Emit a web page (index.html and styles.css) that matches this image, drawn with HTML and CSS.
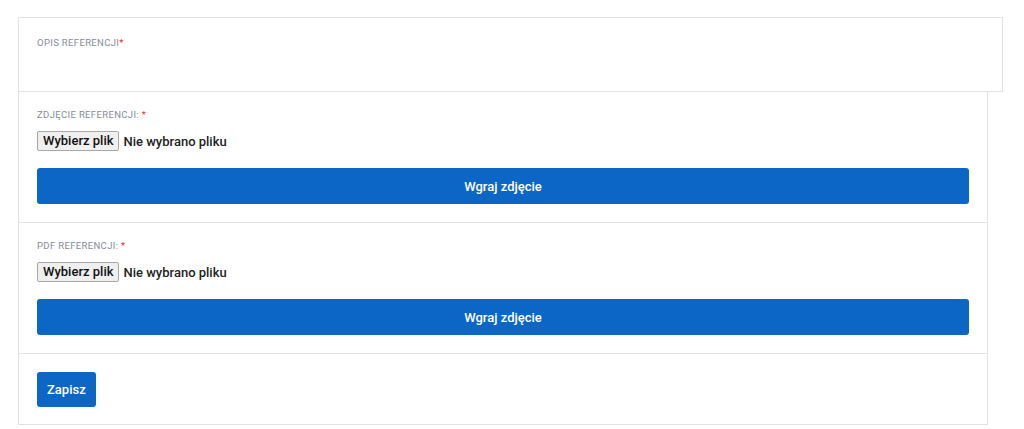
FILE: index.html
```html
<!DOCTYPE html>
<html lang="pl">
<head>
  <meta charset="UTF-8">
  <title>Referencje</title>
  <link rel="stylesheet" href="styles.css">
</head>
<body>
  <form class="ref-form">
    <div class="section section-first">
      <label class="field-label">Opis referencji<span class="req">*</span></label>
    </div>
    <div class="section">
      <label class="field-label">Zdjęcie referencji: <span class="req">*</span></label>
      <div class="file-row">
        <span class="file-btn">Wybierz plik</span>
        <span class="file-name">Nie wybrano pliku</span>
      </div>
      <button type="button" class="upload-btn">Wgraj zdjęcie</button>
    </div>
    <div class="section">
      <label class="field-label">PDF referencji: <span class="req">*</span></label>
      <div class="file-row">
        <span class="file-btn">Wybierz plik</span>
        <span class="file-name">Nie wybrano pliku</span>
      </div>
      <button type="button" class="upload-btn">Wgraj zdjęcie</button>
    </div>
    <div class="section section-last">
      <button type="submit" class="save-btn">Zapisz</button>
    </div>
  </form>
</body>
</html>
```

FILE: styles.css
```css
body {
  margin: 0;
  padding: 17px 0 0 18px;
  background: #fff;
  font-family: Roboto, 'Noto Sans', sans-serif;
  color: #222;
}
.ref-form {
  width: 970px;
}
.section {
  border: 1px solid #e2e2e2;
  border-top: none;
  padding: 17px 18px 18px 18px;
}
.section-first {
  width: 947px;
  border-top: 1px solid #e2e2e2;
  padding-top: 19px;
  padding-bottom: 16px;
  height: 38px;
}
.section-last {
  padding-top: 18px;
  padding-bottom: 17px;
}
.field-label {
  display: block;
  font-size: 9.5px;
  line-height: 12px;
  letter-spacing: 0.35px;
  text-transform: uppercase;
  color: #878c96;
}
.req {
  color: #d0343c;
}
.file-row {
  display: flex;
  align-items: center;
  gap: 4px;
  margin-top: 10px;
  height: 20px;
}
.file-btn {
  box-sizing: border-box;
  height: 20px;
  padding: 0 5px;
  background: #efefef;
  border: 1px solid #a8a8a8;
  border-radius: 2px;
  font-size: 13px;
  font-weight: 500;
  line-height: 18px;
  color: #111;
}
.file-name {
  font-size: 13px;
  font-weight: 500;
  color: #222;
}
.upload-btn {
  display: block;
  width: 100%;
  height: 36px;
  margin-top: 17px;
  border: none;
  border-radius: 3px;
  background: #0b66c5;
  color: #fff;
  font-family: inherit;
  font-size: 13px;
  font-weight: 500;
  cursor: pointer;
}
.save-btn {
  display: block;
  height: 35px;
  padding: 0 10px;
  border: none;
  border-radius: 3px;
  background: #0b66c5;
  color: #fff;
  font-family: inherit;
  font-size: 13px;
  font-weight: 500;
  cursor: pointer;
}
```
